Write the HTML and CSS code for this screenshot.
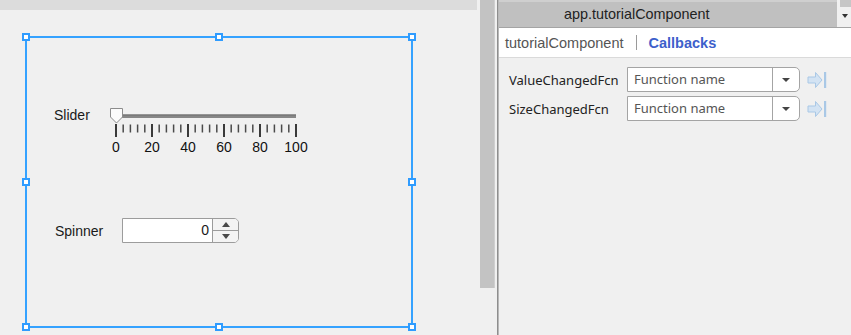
FILE: index.html
```html
<!DOCTYPE html>
<html>
<head>
<meta charset="utf-8">
<link rel="stylesheet" href="styles.css">
</head>
<body>
<div class="app">
  <div class="canvas-pane">
    <div class="topband"></div>
    <div class="design">
      <div class="selbox">
        <span class="handle h-tl"></span><span class="handle h-tm"></span><span class="handle h-tr"></span>
        <span class="handle h-ml"></span><span class="handle h-mr"></span>
        <span class="handle h-bl"></span><span class="handle h-bm"></span><span class="handle h-br"></span>
        <div class="slider-row">
          <div class="lbl slider-lbl">Slider</div>
          <svg class="slider" width="210" height="50" viewBox="0 0 210 50">
            <rect x="8" y="9.5" width="184" height="3.5" fill="#878787"/>
            <rect x="8" y="9.5" width="184" height="1" fill="#6f6f6f"/>
            <g stroke="#3a3a3a">
              <line x1="12" y1="19" x2="12" y2="32" stroke-width="2"/>
              <line x1="48" y1="19" x2="48" y2="32" stroke-width="2"/>
              <line x1="84" y1="19" x2="84" y2="32" stroke-width="2"/>
              <line x1="120" y1="19" x2="120" y2="32" stroke-width="2"/>
              <line x1="156" y1="19" x2="156" y2="32" stroke-width="2"/>
              <line x1="192" y1="19" x2="192" y2="32" stroke-width="2"/>
            </g>
            <g stroke="#4a4a4a" stroke-width="1.5">
              <line x1="19.2" y1="19.5" x2="19.2" y2="27.5"/><line x1="26.4" y1="19.5" x2="26.4" y2="27.5"/><line x1="33.6" y1="19.5" x2="33.6" y2="27.5"/><line x1="40.8" y1="19.5" x2="40.8" y2="27.5"/>
              <line x1="55.2" y1="19.5" x2="55.2" y2="27.5"/><line x1="62.4" y1="19.5" x2="62.4" y2="27.5"/><line x1="69.6" y1="19.5" x2="69.6" y2="27.5"/><line x1="76.8" y1="19.5" x2="76.8" y2="27.5"/>
              <line x1="91.2" y1="19.5" x2="91.2" y2="27.5"/><line x1="98.4" y1="19.5" x2="98.4" y2="27.5"/><line x1="105.6" y1="19.5" x2="105.6" y2="27.5"/><line x1="112.8" y1="19.5" x2="112.8" y2="27.5"/>
              <line x1="127.2" y1="19.5" x2="127.2" y2="27.5"/><line x1="134.4" y1="19.5" x2="134.4" y2="27.5"/><line x1="141.6" y1="19.5" x2="141.6" y2="27.5"/><line x1="148.8" y1="19.5" x2="148.8" y2="27.5"/>
              <line x1="163.2" y1="19.5" x2="163.2" y2="27.5"/><line x1="170.4" y1="19.5" x2="170.4" y2="27.5"/><line x1="177.6" y1="19.5" x2="177.6" y2="27.5"/><line x1="184.8" y1="19.5" x2="184.8" y2="27.5"/>
            </g>
            <path d="M6.5 3.5 H18.5 V12 L12.5 18 L6.5 12 Z" fill="#fbfbfb" stroke="#8c8c8c" stroke-width="1"/>
            <g class="ticklbl" text-anchor="middle">
              <text x="12" y="46.5">0</text>
              <text x="48" y="46.5">20</text>
              <text x="84" y="46.5">40</text>
              <text x="120" y="46.5">60</text>
              <text x="156" y="46.5">80</text>
              <text x="192" y="46.5">100</text>
            </g>
          </svg>
        </div>
        <div class="spinner-row">
          <div class="lbl spinner-lbl">Spinner</div>
          <div class="spinner">
            <div class="spin-val">0</div>
            <div class="spin-btns">
              <div class="spin-btn"><span class="tri-up"></span></div>
              <div class="spin-btn spin-btn-down"><span class="tri-down"></span></div>
            </div>
          </div>
        </div>
      </div>
    </div>
  </div>
  <div class="gutter">
    <div class="scrollbar"></div>
  </div>
  <div class="divider"></div>
  <div class="inspector">
    <div class="tabbar">
      <div class="tab">app.tutorialComponent</div>
      <div class="tabmenu"><span class="tabmenu-box"></span><span class="tabmenu-tri"></span></div>
    </div>
    <div class="subnav">
      <span class="crumb">tutorialComponent</span>
      <span class="sep"></span>
      <span class="active">Callbacks</span>
    </div>
    <div class="props">
      <div class="prop-row">
        <div class="prop-lbl">ValueChangedFcn</div>
        <div class="dd">
          <div class="dd-text">Function name</div>
          <div class="dd-btn"><span class="tri-down"></span></div>
        </div>
        <svg class="goto" width="21" height="18" viewBox="0 0 21 18">
          <path d="M1 6 H8.5 V1.5 L15 9 L8.5 16.5 V12 H1 Z" fill="#d3e3f3" stroke="#a9c8e6" stroke-width="1" stroke-linejoin="round"/>
          <rect x="17" y="1" width="2.2" height="16" fill="#a9c8e6"/>
        </svg>
      </div>
      <div class="prop-row">
        <div class="prop-lbl">SizeChangedFcn</div>
        <div class="dd">
          <div class="dd-text">Function name</div>
          <div class="dd-btn"><span class="tri-down"></span></div>
        </div>
        <svg class="goto" width="21" height="18" viewBox="0 0 21 18">
          <path d="M1 6 H8.5 V1.5 L15 9 L8.5 16.5 V12 H1 Z" fill="#d3e3f3" stroke="#a9c8e6" stroke-width="1" stroke-linejoin="round"/>
          <rect x="17" y="1" width="2.2" height="16" fill="#a9c8e6"/>
        </svg>
      </div>
    </div>
  </div>
</div>
</body>
</html>
```
FILE: styles.css
```css
* { box-sizing: border-box; }
html, body { margin: 0; padding: 0; }
body {
  width: 851px;
  height: 335px;
  overflow: hidden;
  background: #f0f0f0;
  font-family: "Liberation Sans", Arial, sans-serif;
  color: #1a1a1a;
}
.app {
  display: flex;
  height: 335px;
}
.canvas-pane {
  width: 477px;
  flex: none;
  background: #f0f0f0;
}
.topband {
  height: 10px;
  background: #dcdcdc;
}
.design {
  padding: 26px 0 0 25px;
}
.selbox {
  position: relative;
  width: 388px;
  height: 292px;
  border: 2px solid #35a2ff;
  padding-left: 27px;
}
.handle {
  position: absolute;
  width: 8px;
  height: 8px;
  background: #fff;
  border: 2px solid #2f9cff;
}
.h-tl { left: -5px; top: -5px; }
.h-tm { left: 188px; top: -5px; }
.h-tr { right: -5px; top: -5px; }
.h-ml { left: -5px; top: 140px; }
.h-mr { right: -5px; top: 140px; }
.h-bl { left: -5px; bottom: -5px; }
.h-bm { left: 188px; bottom: -5px; }
.h-br { right: -5px; bottom: -5px; }

.lbl {
  font-size: 14px;
  line-height: 16px;
  color: #1a1a1a;
}
.slider-row {
  display: flex;
  align-items: flex-start;
  margin-top: 69px;
}
.slider-lbl {
  width: 50px;
  flex: none;
}
.slider {
  display: block;
  margin-top: -2px;
  flex: none;
}
.ticklbl text {
  font-family: "Liberation Sans", Arial, sans-serif;
  font-size: 14px;
  fill: #111;
}
.spinner-row {
  display: flex;
  align-items: center;
  margin-top: 63px;
}
.spinner-lbl {
  width: 67px;
  margin-left: 1px;
  flex: none;
}
.spinner {
  display: flex;
  width: 117px;
  height: 25px;
  border: 1px solid #9c9c9c;
  border-radius: 0 5px 5px 0;
  background: #fff;
}
.spin-val {
  flex: 1;
  text-align: right;
  padding-right: 3px;
  font-size: 14px;
  line-height: 23px;
}
.spin-btns {
  width: 26px;
  border-left: 1px solid #9c9c9c;
  display: flex;
  flex-direction: column;
  background: #f4f4f4;
  border-radius: 0 4px 4px 0;
}
.spin-btn {
  flex: 1;
  display: flex;
  align-items: center;
  justify-content: center;
}
.spin-btn-down {
  border-top: 1px solid #9c9c9c;
}
.tri-up {
  width: 0; height: 0;
  border-left: 4.5px solid transparent;
  border-right: 4.5px solid transparent;
  border-bottom: 5px solid #4a4a4a;
}
.tri-down {
  width: 0; height: 0;
  border-left: 4.5px solid transparent;
  border-right: 4.5px solid transparent;
  border-top: 5px solid #4a4a4a;
}

.gutter {
  width: 20px;
  flex: none;
  padding-left: 3px;
}
.scrollbar {
  width: 15px;
  height: 288px;
  background: #c3c3c3;
  border-right: 1px solid #cfcfcf;
}
.divider {
  width: 2px;
  flex: none;
  background: #8e8e8e;
  border-right: 1px solid #b8b8b8;
}
.inspector {
  flex: 1;
  display: flex;
  flex-direction: column;
  background: #f0f0f0;
}
.tabbar {
  display: flex;
  height: 28px;
  border-bottom: 1px solid #a4a4a4;
}
.tab {
  flex: 1;
  background: #c0c0c0;
  border-top: 2px solid #cfcfcf;
  font-size: 14.4px;
  line-height: 25px;
  padding-left: 65px;
  color: #222;
}
.tabmenu {
  width: 14px;
  position: relative;
  background: #f0f0f0;
}
.tabmenu-box {
  position: absolute;
  left: 3px;
  top: 0;
  width: 11px;
  height: 7px;
  background: #c6c6c6;
}
.tabmenu-tri {
  position: absolute;
  left: 5px;
  top: 14px;
  width: 0; height: 0;
  border-left: 3.5px solid transparent;
  border-right: 3.5px solid transparent;
  border-top: 4px solid #333;
}
.subnav {
  height: 30px;
  background: #fff;
  border-bottom: 1px solid #dadada;
  display: flex;
  align-items: center;
  padding-left: 6px;
  font-size: 14.5px;
}
.crumb {
  color: #555;
}
.sep {
  width: 1px;
  height: 15px;
  background: #9a9a9a;
  margin: 0 12px 0 12px;
}
.active {
  color: #3d5fcb;
  font-weight: bold;
}
.props {
  padding: 9px 0 0 10px;
  display: flex;
  flex-direction: column;
  gap: 4px;
}
.prop-row {
  display: flex;
  align-items: center;
}
.prop-lbl {
  width: 118px;
  flex: none;
  font-family: "Noto Sans", "Open Sans", sans-serif;
  font-size: 13px;
  color: #222;
}
.dd {
  display: flex;
  width: 173px;
  height: 25px;
  border: 1px solid #a4a4a4;
  border-radius: 0 5px 5px 0;
  background: #fff;
}
.dd-text {
  flex: 1;
  padding-left: 6px;
  font-family: "Noto Sans", "Open Sans", sans-serif;
  font-size: 13px;
  line-height: 23px;
  color: #555;
}
.dd-btn {
  width: 27px;
  border-left: 1px solid #a4a4a4;
  display: flex;
  align-items: center;
  justify-content: center;
}
.dd-btn .tri-down {
  border-left-width: 4px;
  border-right-width: 4px;
  border-top-width: 4px;
  border-top-color: #444;
}
.goto {
  display: block;
  margin-left: 7px;
}
```
